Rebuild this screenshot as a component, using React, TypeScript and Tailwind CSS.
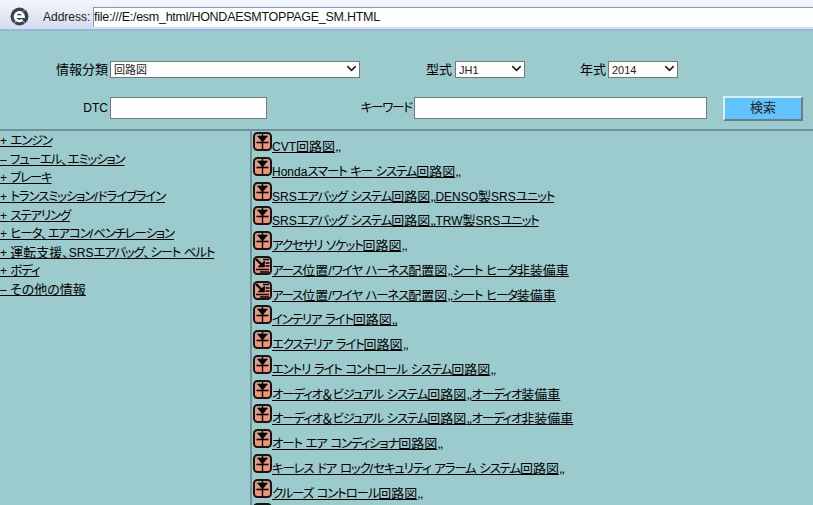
import { ChevronDown } from "lucide-react";

const jp = "[font-family:'Liberation_Sans','Noto_Sans_CJK_JP',sans-serif] [font-feature-settings:'palt']";

const categories = [
  "+ エンジン",
  "– フューエル、エミッション",
  "+ ブレーキ",
  "+ トランスミッション/ドライブライン",
  "+ ステアリング",
  "+ ヒータ、エアコン/ベンチレーション",
  "+ 運転支援、SRSエアバッグ、シート ベルト",
  "+ ボディ",
  "– その他の情報",
];

const docs = [
  { title: "CVT回路図,,", kind: "circuit" },
  { title: "Hondaスマート キー システム回路図,,", kind: "circuit" },
  { title: "SRSエアバッグ システム回路図,,DENSO製SRSユニット", kind: "circuit" },
  { title: "SRSエアバッグ システム回路図,,TRW製SRSユニット", kind: "circuit" },
  { title: "アクセサリ ソケット回路図,,", kind: "circuit" },
  { title: "アース位置/ワイヤ ハーネス配置図,,シート ヒータ非装備車", kind: "ground" },
  { title: "アース位置/ワイヤ ハーネス配置図,,シート ヒータ装備車", kind: "ground" },
  { title: "インテリア ライト回路図,,", kind: "circuit" },
  { title: "エクステリア ライト回路図,,", kind: "circuit" },
  { title: "エントリ ライト コントロール システム回路図,,", kind: "circuit" },
  { title: "オーディオ＆ビジュアル システム回路図,,オーディオ装備車", kind: "circuit" },
  { title: "オーディオ＆ビジュアル システム回路図,,オーディオ非装備車", kind: "circuit" },
  { title: "オート エア コンディショナ回路図,,", kind: "circuit" },
  { title: "キーレス ドア ロック/セキュリティ アラーム システム回路図,,", kind: "circuit" },
  { title: "クルーズ コントロール回路図,,", kind: "circuit" },
];

// the original font sets katakana and latin narrower than kanji
function Kana({ text }: { text: string }) {
  return (
    <>
      {text.split(/([\u30A0-\u30FF]+|[A-Za-z]+|,,|[+–] )/).map((part, i) => {
        if (i % 2 === 0) return part;
        if (/^[\u30A0-\u30FF]/.test(part))
          return (
            <span key={i} className="text-[12.5px] tracking-[-1.2px]">
              {part}
            </span>
          );
        if (part === ",,")
          return (
            <span key={i} className="tracking-[-1px]">
              {part}
            </span>
          );
        return (
          <span key={i} className="text-[12px]">
            {part}
          </span>
        );
      })}
    </>
  );
}

function DocIcon({ kind }: { kind: string }) {
  return (
    <svg width="19" height="19" viewBox="0 0 19 19" className="shrink-0">
      <defs>
        <linearGradient id="salmon" x1="0" y1="0" x2="0" y2="1">
          <stop offset="0" stopColor="#c2a598" />
          <stop offset="0.5" stopColor="#ec9880" />
          <stop offset="1" stopColor="#f78e70" />
        </linearGradient>
      </defs>
      <rect x="1" y="1" width="17" height="17" rx="3.5" fill="url(#salmon)" stroke="#1a1512" strokeWidth="2" />
      {kind === "circuit" ? (
        <g fill="#000" stroke="#000">
          <path d="M9.5 2v15" strokeWidth="1.4" />
          <path d="M4.5 4h10l-5 6z" strokeWidth="0.6" />
          <path d="M3.5 10.5h12" strokeWidth="1.6" />
        </g>
      ) : (
        <g fill="none" stroke="#000">
          <path d="M3 3l7 7" strokeWidth="2.4" />
          <path d="M5 11h6.5V5z" fill="#000" strokeWidth="0.6" />
          <path d="M10 3.5h6M12.5 7h4M12.5 10h4M3 13.5h13M7 16h9" strokeWidth="1.4" />
        </g>
      )}
    </svg>
  );
}

function Logo() {
  return (
    <svg width="19" height="19" viewBox="0 0 19 19">
      <circle cx="9.5" cy="9.5" r="9" fill="#37444e" />
      <path d="M5.2 9.6h8.4a4.3 4.3 0 1 0-1.3 3.2" fill="none" stroke="#fff" strokeWidth="2.6" />
      <path d="M16 1.5l-3 3M3.5 17l2.5-3M15.5 17l-2.5-3" stroke="#dfe5f1" strokeWidth="0.8" />
    </svg>
  );
}

function Dropdown({ value, width }: { value: string; width: string }) {
  return (
    <div className={`relative h-[17px] ${width}`}>
      <select
        defaultValue={value}
        className={`${jp} block h-full w-full appearance-none rounded-none border border-[#767676] bg-white pl-[3px] text-[11px] text-[#222] outline-none`}
      >
        <option>{value}</option>
      </select>
      <ChevronDown size={15} strokeWidth={2.6} className="pointer-events-none absolute right-[1px] top-[0px] text-[#222]" />
    </div>
  );
}

export default function App() {
  return (
    <div className={`${jp} flex h-[505px] w-[813px] flex-col overflow-hidden bg-[#9ccbcd] text-[13px] text-black`}>
      {/* address bar */}
      <div className="flex h-[31px] shrink-0 items-start border-b-2 border-[#9db3e0] bg-gradient-to-b from-[#f4f6fb] to-[#d3dcef]">
        <div className="ml-[10px] mt-[7px] w-[33px] shrink-0">
          <Logo />
        </div>
        <span className="mt-[8px] w-[50px] shrink-0 text-[12px] text-[#222]">Address:</span>
        <div className="mt-[7px] h-[20px] flex-1 border-t border-l border-[#7f9bd0] bg-white text-[12.5px] leading-[18px] tracking-[-0.27px] text-[#111] [font-family:'Liberation_Sans',sans-serif]">
          <span>file:///E:/esm_html/HONDAESMTOPPAGE_SM.HTML</span>
        </div>
      </div>

      {/* search form */}
      <div className="h-[100px] shrink-0 border-b-2 border-[#6f919c] pt-[29px]">
        <div className="flex h-[19px] items-center">
          <label className="w-[108px] shrink-0 text-right">情報分類</label>
          <div className="ml-[2px]"><Dropdown value="回路図" width="w-[250px]" /></div>
          <label className="ml-[66px] w-[27px] shrink-0">型式</label>
          <div className="ml-[2px]"><Dropdown value="JH1" width="w-[70px]" /></div>
          <label className="ml-[55px] w-[26px] shrink-0">年式</label>
          <div className="ml-[2px]"><Dropdown value="2014" width="w-[70px]" /></div>
        </div>
        <div className="mt-[16px] flex h-[26px] items-center">
          <label className="w-[108px] shrink-0 text-right"><Kana text="DTC" /></label>
          <input className="ml-[2px] h-[22px] w-[157px] border border-[#767676] bg-white" />
          <label className="w-[145px] shrink-0 text-right"><Kana text="キーワード" /></label>
          <input className="ml-[2px] h-[22px] w-[293px] border border-[#767676] bg-white" />
          <button className="ml-[16px] h-[25px] w-[80px] border-2 border-t-[#d7f0fb] border-l-[#d7f0fb] border-r-[#6b7d85] border-b-[#6b7d85] bg-[#62c3fc] text-[13px] text-[#222]">
            検索
          </button>
        </div>
      </div>

      {/* tree + results */}
      <div className="flex min-h-0 flex-1">
        <ul className="w-[250px] shrink-0 pt-[1px]">
          {categories.map((c) => (
            <li key={c} className="h-[18.65px] leading-[18.65px] whitespace-nowrap">
              <a className="underline"><Kana text={c} /></a>
            </li>
          ))}
        </ul>
        <div className="w-[2px] shrink-0 bg-[#6f919c]" />
        <ul className="min-w-0 flex-1 pl-[1px] pt-[1px]">
          {docs.map((d) => (
            <li key={d.title} className="flex h-[24.75px] items-start whitespace-nowrap">
              <DocIcon kind={d.kind} />
              <a className="mt-[6px] leading-[18px] underline"><Kana text={d.title} /></a>
            </li>
          ))}
          <li className="flex h-[24.75px] items-start">
            <DocIcon kind="circuit" />
          </li>
        </ul>
      </div>
    </div>
  );
}
